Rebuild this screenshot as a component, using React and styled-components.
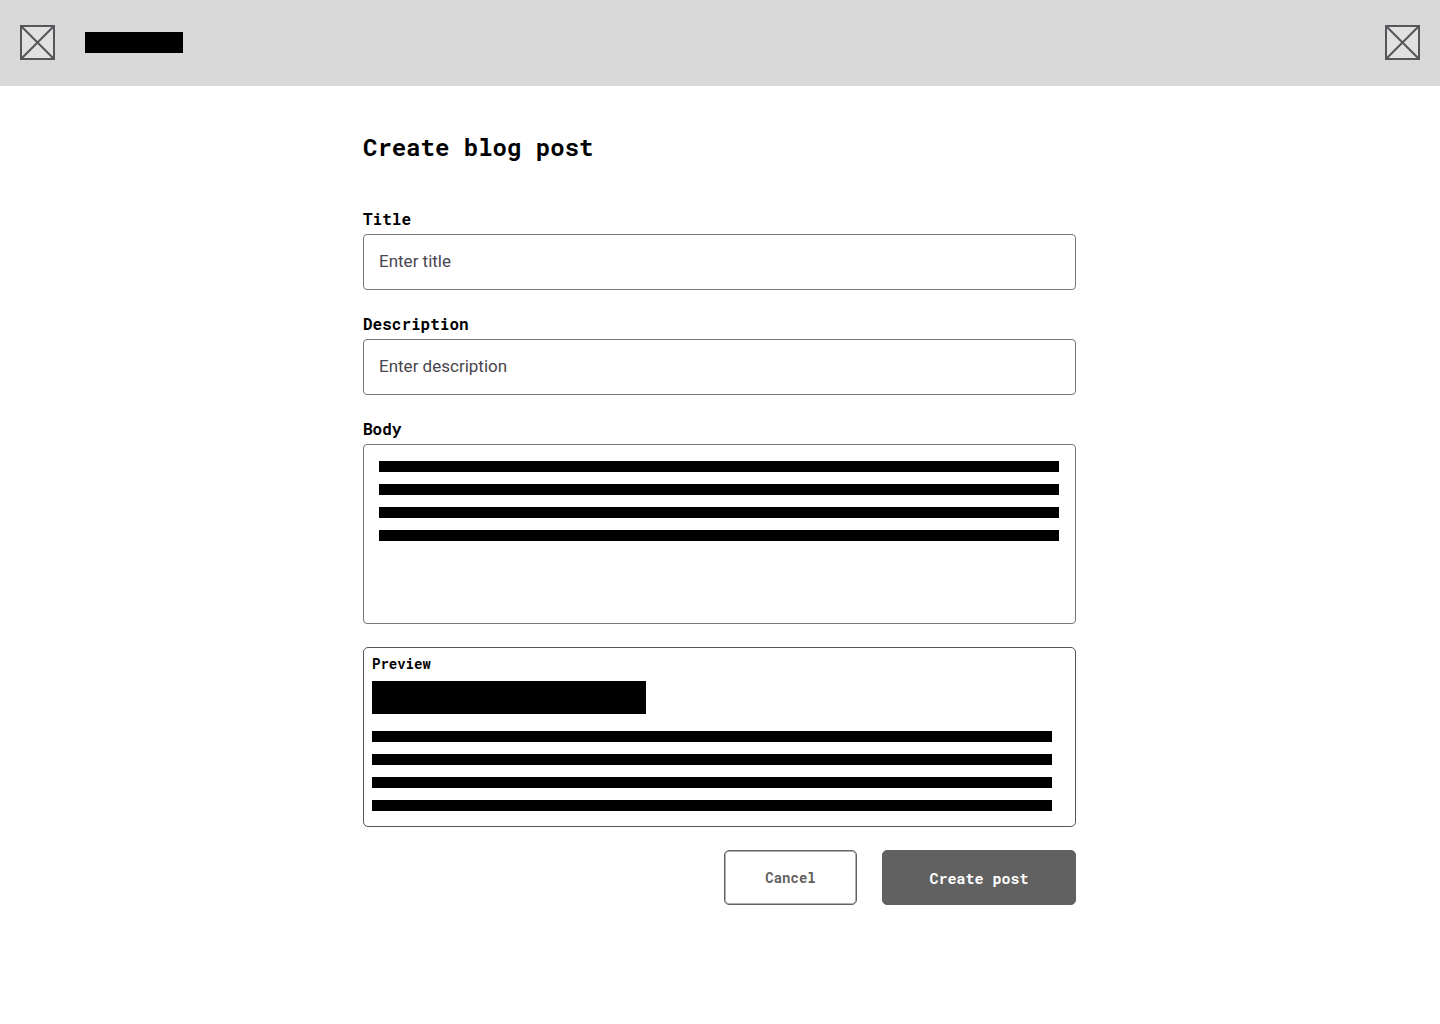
import React from "react";
import styled, { createGlobalStyle } from "styled-components";

const mono = `"Roboto Mono", "Liberation Mono", monospace`;
const sans = `Roboto, "Liberation Sans", sans-serif`;

const GlobalStyle = createGlobalStyle`
  *, *::before, *::after { box-sizing: border-box; }
  body { margin: 0; background: #fff; color: #000; font-family: ${mono}; }
`;

const Header = styled.header`
  display: flex;
  align-items: center;
  justify-content: space-between;
  padding: 25px 20px 26px;
  background: #d9d9d9;
`;

const Brand = styled.div`
  display: flex;
  align-items: center;
  gap: 30px;
`;

const IconButton = styled.button`
  display: block;
  width: 35px;
  height: 35px;
  padding: 0;
  border: 0;
  background: none;
  cursor: pointer;
`;

const Crossed = styled.svg`
  display: block;
  width: 35px;
  height: 35px;
  fill: #e1e1e1;
  stroke: #56565a;
  stroke-width: 2;
`;

const Block = styled.div`
  width: 100%;
  max-width: ${(p) => p.$width}px;
  height: ${(p) => p.$height}px;
  background: #000;
`;

const SiteName = styled(Block)`
  width: 98px;
`;

const Main = styled.main`
  max-width: 714px;
  margin: 0 auto;
  padding: 45px 1px 45px 0;
`;

const Heading = styled.h1`
  margin: 0 0 45px;
  font-size: 24px;
  line-height: 32px;
  font-weight: 700;
`;

const Form = styled.form`
  display: flex;
  flex-direction: column;
  gap: 23px;
`;

const Field = styled.div`
  display: flex;
  flex-direction: column;
  gap: 4px;
`;

const Label = styled.label`
  font-size: 16px;
  line-height: 22px;
  font-weight: 700;
`;

const Input = styled.input`
  width: 100%;
  height: 56px;
  padding: 0 15px 2px;
  border: 1px solid #79767d;
  border-radius: 4px;
  background: #fff;
  color: #49454f;
  font-family: ${sans};
  font-size: 17px;
  line-height: 24px;

  &::placeholder {
    color: #49454f;
    opacity: 1;
  }
`;

const Editor = styled.div`
  position: relative;
`;

const TextArea = styled.textarea`
  display: block;
  width: 100%;
  height: 180px;
  padding: 15px;
  border: 1px solid #79767d;
  border-radius: 4px;
  background: #fff;
  font-family: ${sans};
  font-size: 17px;
  line-height: 24px;
  resize: none;
`;

const Lines = styled.div`
  display: flex;
  flex-direction: column;
  gap: 12px;
`;

const EditorLines = styled(Lines)`
  position: absolute;
  inset: 17px 16px auto;
  pointer-events: none;
`;

const Preview = styled.section`
  padding: 6px 8px 15px;
  border: 1px solid #565656;
  border-radius: 5px;
`;

const PreviewTitle = styled.h2`
  margin: 0 0 7px;
  font-size: 14px;
  line-height: 20px;
  font-weight: 700;
`;

const PreviewLines = styled(Lines)`
  margin-top: 17px;
`;

const Actions = styled.div`
  display: flex;
  justify-content: flex-end;
  gap: 25px;
`;

const Button = styled.button`
  height: 55px;
  width: ${(p) => (p.$primary ? 194 : 133)}px;
  padding: 0;
  border: 1px solid #616161;
  border-radius: 5px;
  background: ${(p) => (p.$primary ? "#616161" : "#fff")};
  box-shadow: ${(p) => (p.$primary ? "none" : "inset 0 0 0 1px #b0b0b0")};
  color: ${(p) => (p.$primary ? "#fff" : "#616161")};
  font-family: ${mono};
  font-size: ${(p) => (p.$primary ? 15 : 14)}px;
  line-height: 20px;
  font-weight: 700;
  cursor: pointer;
`;

function CrossedBox() {
  return (
    <Crossed viewBox="0 0 35 35" aria-hidden="true">
      <rect x="1" y="1" width="33" height="33" />
      <path d="M1 1 34 34M34 1 1 34" />
    </Crossed>
  );
}

const rows = [1, 2, 3, 4];
const textLines = rows.map((n) => <Block key={n} $width={680} $height={11} />);

export default function App() {
  return (
    <>
      <GlobalStyle />
      <Header>
        <Brand>
          <IconButton type="button" aria-label="Home">
            <CrossedBox />
          </IconButton>
          <SiteName $width={98} $height={21} />
        </Brand>
        <IconButton type="button" aria-label="Account">
          <CrossedBox />
        </IconButton>
      </Header>
      <Main>
        <Heading>Create blog post</Heading>
        <Form onSubmit={(e) => e.preventDefault()}>
          <Field>
            <Label htmlFor="title">Title</Label>
            <Input id="title" type="text" placeholder="Enter title" />
          </Field>
          <Field>
            <Label htmlFor="description">Description</Label>
            <Input id="description" type="text" placeholder="Enter description" />
          </Field>
          <Field>
            <Label htmlFor="body">Body</Label>
            <Editor>
              <TextArea id="body" />
              <EditorLines>{textLines}</EditorLines>
            </Editor>
          </Field>
          <Preview>
            <PreviewTitle>Preview</PreviewTitle>
            <Block $width={274} $height={33} />
            <PreviewLines>{textLines}</PreviewLines>
          </Preview>
          <Actions>
            <Button type="button">Cancel</Button>
            <Button type="submit" $primary>
              Create post
            </Button>
          </Actions>
        </Form>
      </Main>
    </>
  );
}
